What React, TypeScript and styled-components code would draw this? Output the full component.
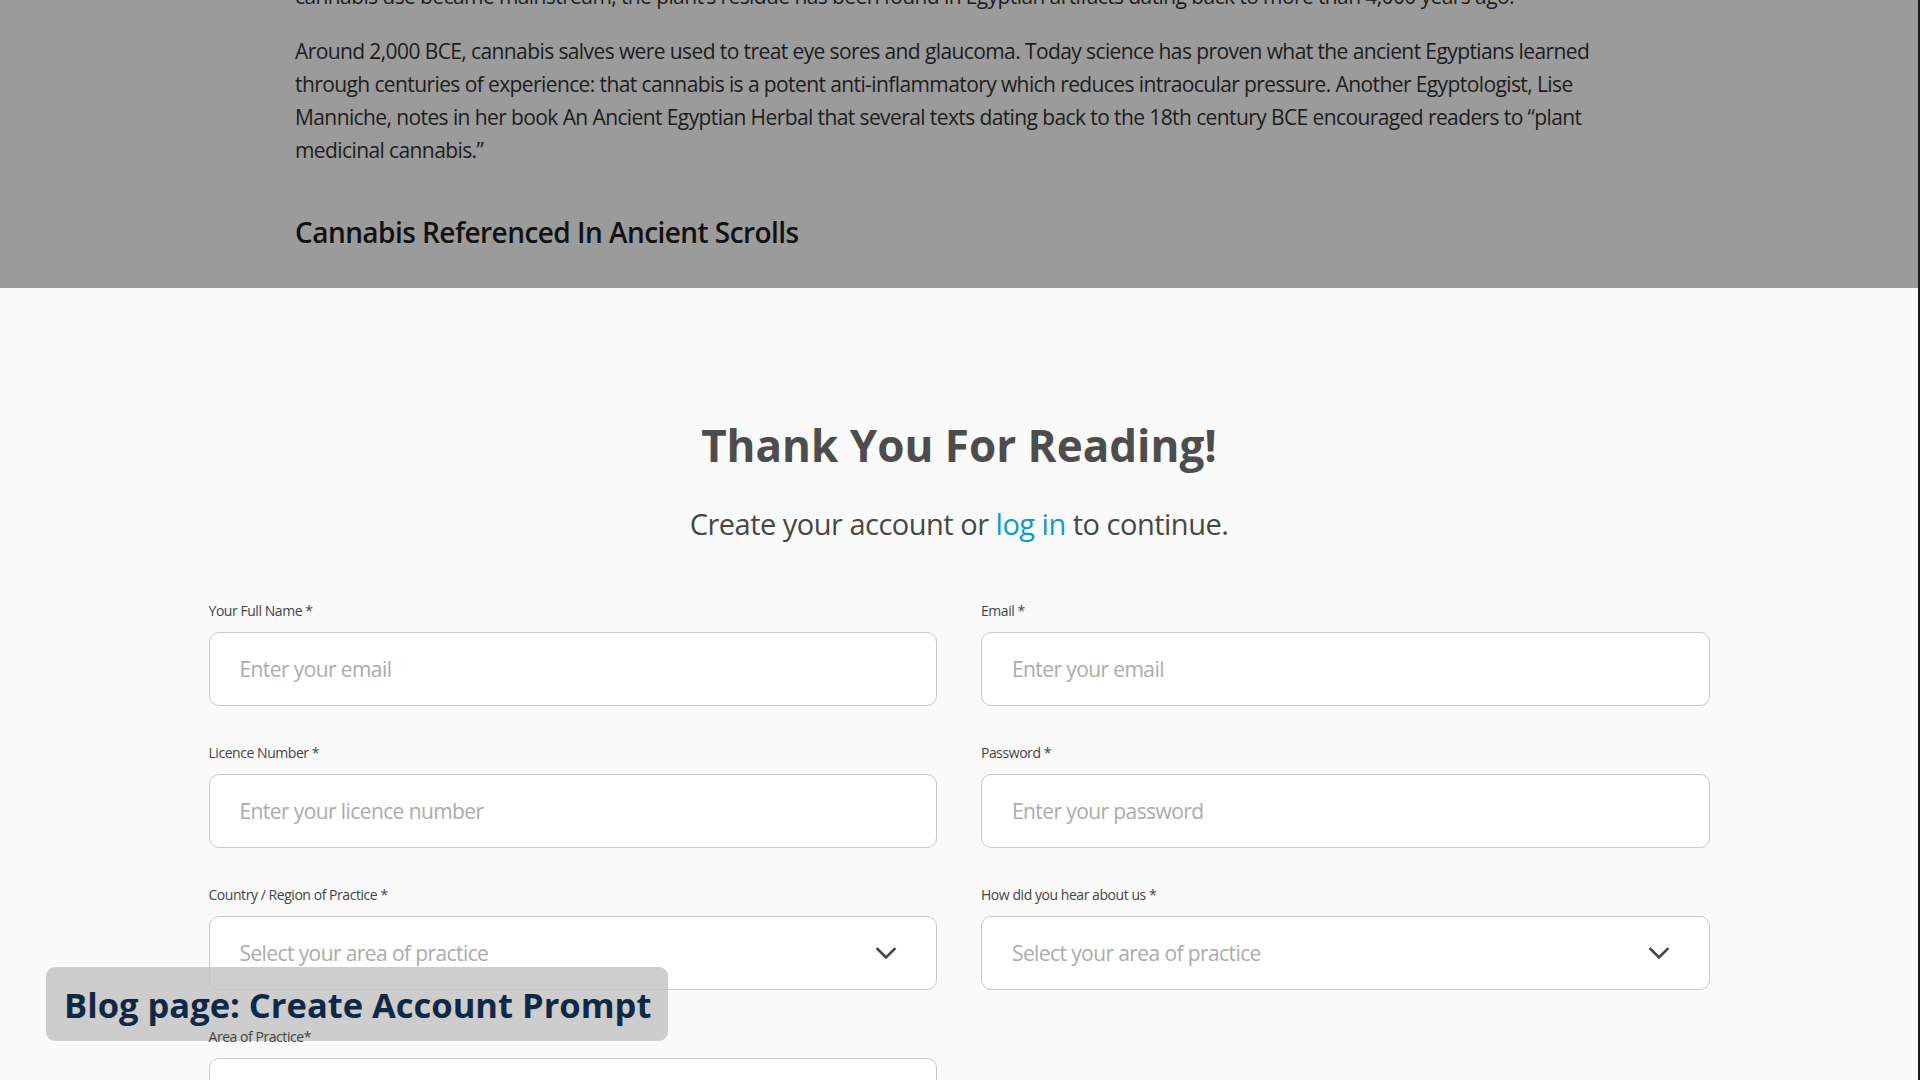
import React from "react";
import styled, { createGlobalStyle } from "styled-components";

const Global = createGlobalStyle`
  html, body { margin: 0; padding: 0; }
  body { background: #fafafa; font-family: "Open Sans", "Noto Sans", sans-serif; }
  * { box-sizing: border-box; }
`;

const Page = styled.div`
  position: relative;
  width: 1920px;
  height: 1080px;
  overflow: hidden;
  display: flex;
  flex-direction: column;
  border-right: 2px solid #1c1c1c;
  background: #fafafa;
`;

const Backdrop = styled.section`
  flex: 0 0 288px;
  height: 288px;
  overflow: hidden;
  background: #9b9b9b;
  padding-left: 295px;
`;

const Article = styled.div`
  width: 1320px;
  color: #1d1d1d;
`;

const Para = styled.p<{ $first?: boolean }>`
  margin: ${(p) => (p.$first ? "-20px" : "0")} 0 22px;
  font-size: 21px;
  letter-spacing: -0.6px;
  line-height: 33px;
`;

const SubHeading = styled.h2`
  margin: 45px 0 0;
  font-size: 28px;
  letter-spacing: -0.55px;
  line-height: 40px;
  font-weight: 600;
  color: #111;
`;

const Panel = styled.section`
  flex: 1;
  background: #fafafa;
  padding-top: 132px;
  display: flex;
  flex-direction: column;
  align-items: center;
`;

const Title = styled.h1`
  margin: 0;
  font-size: 44px;
  line-height: 50px;
  font-weight: 700;
  color: #4d4d4d;
`;

const Subtitle = styled.p`
  margin: 34px 0 0;
  font-size: 29px;
  letter-spacing: -0.5px;
  line-height: 40px;
  font-weight: 500;
  color: #474747;
`;

const Link = styled.a`
  color: #0e9acd;
  text-decoration: none;
`;

const Form = styled.form`
  margin-top: 57px;
  width: 1501px;
  display: grid;
  grid-template-columns: 1fr 1fr;
  column-gap: 44px;
  row-gap: 37px;
`;

const Field = styled.div`
  display: flex;
  flex-direction: column;
  gap: 11px;
`;

const Label = styled.label`
  position: relative;
  z-index: 3;
  font-size: 14px;
  letter-spacing: -0.45px;
  line-height: 20px;
  color: #444;
`;

const Box = styled.div`
  height: 74px;
  border: 1.5px solid #c9c9c9;
  border-radius: 10px;
  background: #fff;
  display: flex;
  align-items: center;
  justify-content: space-between;
  padding: 0 38px 0 30px;
`;

const Input = styled.input`
  flex: 1;
  border: none;
  outline: none;
  background: transparent;
  font-family: "Open Sans", "Noto Sans", sans-serif;
  font-size: 21px;
  letter-spacing: -0.6px;
  color: #333;
  padding: 0;
  &::placeholder { color: #ababab; }
`;

const Placeholder = styled.span`
  font-size: 21px;
  letter-spacing: -0.6px;
  color: #ababab;
`;

const Caption = styled.div`
  position: absolute;
  left: 46px;
  top: 967px;
  width: 622px;
  height: 74px;
  border-radius: 9px;
  background: rgba(194, 194, 194, 0.8);
  display: flex;
  align-items: center;
  padding-left: 18px;
  z-index: 2;
  font-size: 34.5px;
  font-weight: 700;
  color: #0f2846;
  white-space: nowrap;
`;

const Chevron = () => (
  <svg width="24" height="24" viewBox="0 0 24 24" fill="none">
    <polyline points="3.5,8 12,16.5 20.5,8" stroke="#444" strokeWidth="2.6" strokeLinecap="square" strokeLinejoin="miter" />
  </svg>
);

const TextField = ({ label, placeholder }: { label: string; placeholder: string }) => (
  <Field>
    <Label>{label}</Label>
    <Box>
      <Input placeholder={placeholder} />
    </Box>
  </Field>
);

const SelectField = ({ label, placeholder }: { label: string; placeholder: string }) => (
  <Field>
    <Label>{label}</Label>
    <Box>
      <Placeholder>{placeholder}</Placeholder>
      <Chevron />
    </Box>
  </Field>
);

export default function App() {
  return (
    <>
      <Global />
      <Page>
        <Backdrop>
          <Article>
            <Para $first>
              cannabis use became mainstream, the plant’s residue has been found in Egyptian artifacts dating back to more than 4,000 years ago.
            </Para>
            <Para>
              Around 2,000 BCE, cannabis salves were used to treat eye sores and glaucoma. Today science has proven what the ancient Egyptians learned through centuries of experience: that cannabis is a potent anti-inflammatory which reduces intraocular pressure. Another Egyptologist, Lise Manniche, notes in her book An Ancient Egyptian Herbal that several texts dating back to the 18th century BCE encouraged readers to “plant medicinal cannabis.”
            </Para>
            <SubHeading>Cannabis Referenced In Ancient Scrolls</SubHeading>
          </Article>
        </Backdrop>
        <Panel>
          <Title>Thank You For Reading!</Title>
          <Subtitle>
            Create your account or <Link href="#">log in</Link> to continue.
          </Subtitle>
          <Form onSubmit={(e) => e.preventDefault()}>
            <TextField label="Your Full Name *" placeholder="Enter your email" />
            <TextField label="Email *" placeholder="Enter your email" />
            <TextField label="Licence Number *" placeholder="Enter your licence number" />
            <TextField label="Password *" placeholder="Enter your password" />
            <SelectField label="Country / Region of Practice *" placeholder="Select your area of practice" />
            <SelectField label="How did you hear about us *" placeholder="Select your area of practice" />
            <TextField label="Area of Practice*" placeholder="" />
          </Form>
        </Panel>
        <Caption>Blog page: Create Account Prompt</Caption>
      </Page>
    </>
  );
}
